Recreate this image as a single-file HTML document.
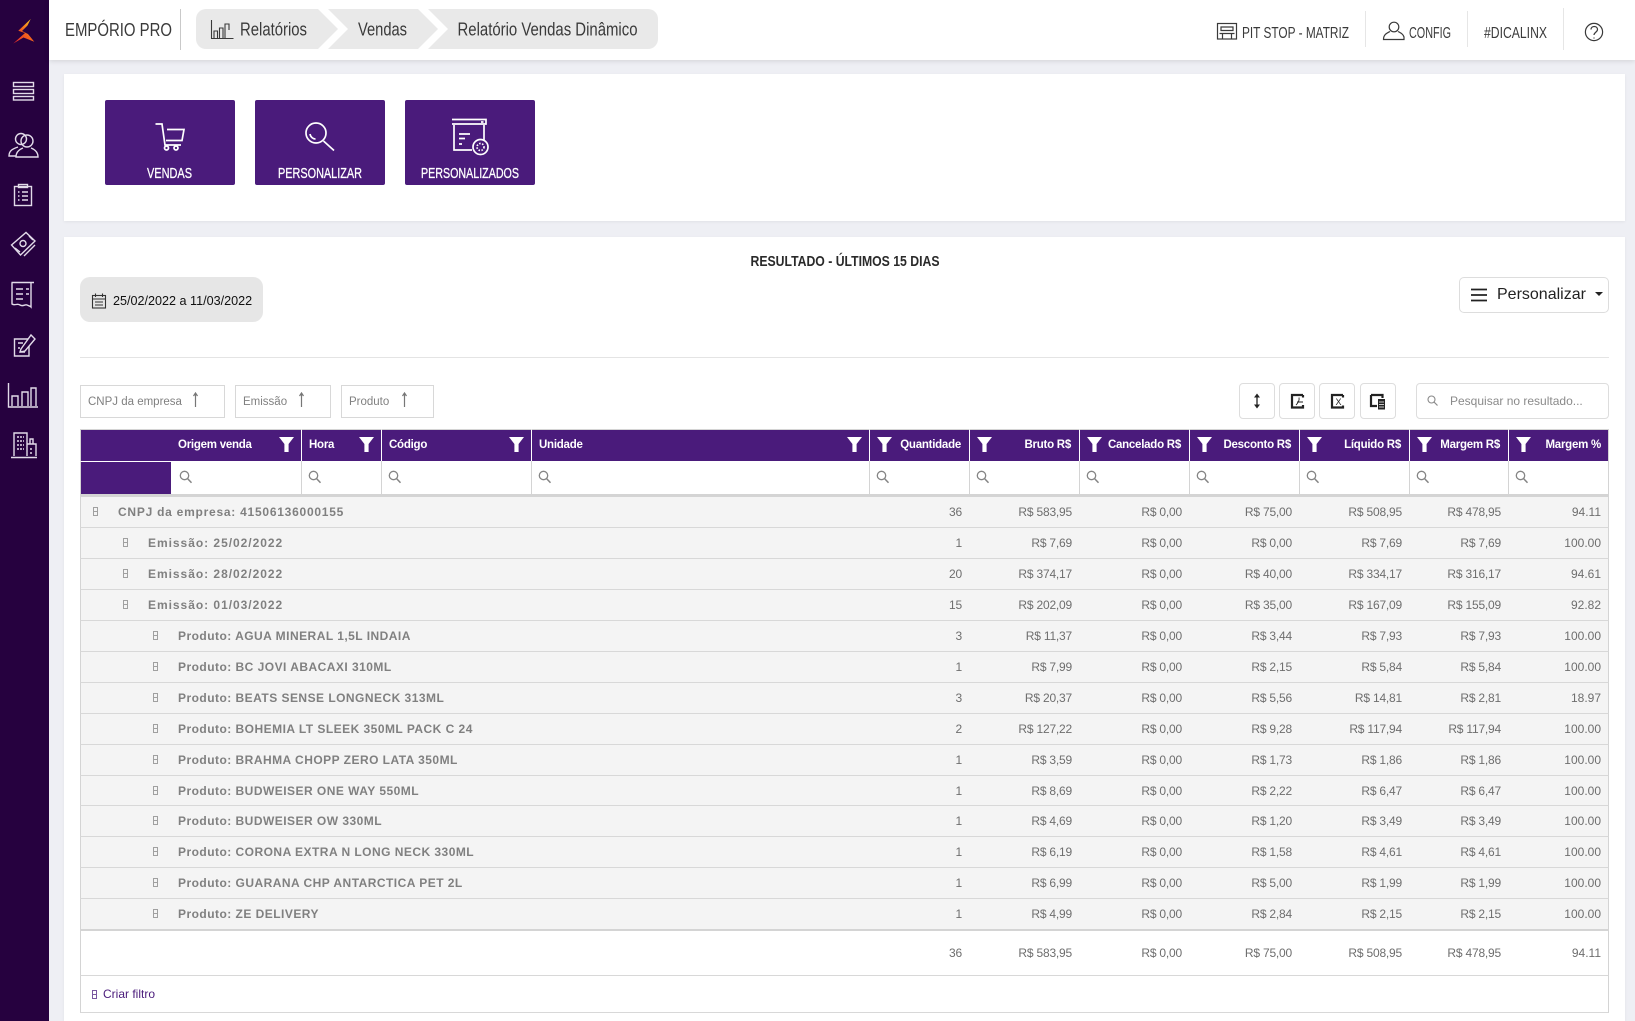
<!DOCTYPE html>
<html lang="pt-BR"><head><meta charset="utf-8"><title>Relatório Vendas Dinâmico</title>
<style>
html,body{margin:0;padding:0}
body{width:1635px;height:1021px;position:relative;overflow:hidden;background:#eeeff4;font-family:"Liberation Sans",sans-serif;color:#666}
.a{position:absolute}
svg{display:block;overflow:visible}
#side{left:0;top:0;width:49px;height:1021px;background:#26013f}
#top{left:49px;top:0;width:1586px;height:60px;background:#fff;box-shadow:0 1px 5px rgba(0,0,0,.12)}
.p{background:#fff;box-shadow:0 1px 3px rgba(0,0,0,.06);left:64px;width:1561px}
.btn{background:#4a1b7b;border-radius:2px;top:100px;width:130px;height:85px}
.chip{top:385px;height:33px;box-sizing:border-box;border:1px solid #d8d8d8;font-size:11.5px;line-height:32px;padding-left:7px;color:#808080}
.tool{top:383px;width:36px;height:36px;box-sizing:border-box;border:1px solid #ddd;border-radius:4px;background:#fff}
.div{width:1px;background:#e6e6e6}
table{position:absolute;left:80px;top:429px;width:1529px;table-layout:fixed;border-collapse:separate;border-spacing:0;font-size:12px}
th{background:#4a1b7b;color:#fff;height:32px;box-sizing:border-box;font-weight:bold;font-size:11.5px;letter-spacing:-.25px;padding:0 8px 1px 7px;border-right:1px solid #fff;border-top:1px solid #d4d4d4;text-align:right;position:relative;white-space:nowrap}
th.l{text-align:left}
th svg{position:absolute;top:7px;width:15px;height:15px}
th.l svg{right:7px}th.rr svg{left:7px}
.f td{height:36px;box-sizing:border-box;border-right:1px solid #d4d4d4;border-bottom:3px solid #d4d4d4;position:relative;background:#fff}
.f td svg{position:absolute;left:6px;top:9px}
.f td.o svg{left:8px}
.d td{height:31px;box-sizing:border-box;background:#f4f4f4;border-bottom:1px solid #d8d8d8;text-align:right;padding:0 8px;white-space:nowrap;color:#6e6e6e;letter-spacing:-.2px}
.d td.rb,.t td.rb{letter-spacing:0}
.d td.n{text-align:left;font-weight:bold;color:#808080;letter-spacing:.47px;position:relative;font-size:12px}
.d td.l0{letter-spacing:.75px}
.d td.l1{letter-spacing:.97px}
.d tr.s td{height:30px}
.d tr:last-child td{border-bottom:2px solid #d4d4d4;height:32px}
.n i{position:absolute;top:10px;width:5px;height:9px;border:1px solid #a0a0a0;box-sizing:border-box;background:linear-gradient(#a0a0a0,#a0a0a0) 0 3px/100% 1px no-repeat}
.l0{padding-left:37px!important}.l0 i{left:12px}
.l1{padding-left:67px!important}.l1 i{left:42px}
.l2{padding-left:97px!important}.l2 i{left:72px}
.t td{height:45px;box-sizing:border-box;background:#fff;border-bottom:1px solid #d8d8d8;text-align:right;padding:0 8px;color:#6e6e6e;letter-spacing:-.2px}
.c td{height:37px;box-sizing:border-box;background:#fff;border-bottom:1px solid #d8d8d8;text-align:left;color:#4a1b7b;padding-left:22px;position:relative}
.c i{position:absolute;left:11px;top:14px;width:5px;height:9px;border:1px solid #7a58a0;box-sizing:border-box;background:linear-gradient(#7a58a0,#7a58a0) 0 3px/100% 1px no-repeat}
.lb{border-left:1px solid #d4d4d4}.rb{border-right:1px solid #d4d4d4;padding-right:7px!important}
</style></head><body>
<svg width="0" height="0" style="position:absolute"><defs>
<symbol id="fn" viewBox="0 0 15 15"><path d="M0 0H15L9.600 7V15H5.400V7Z" fill="#fff"/></symbol>
<symbol id="mg" viewBox="0 0 14 14"><circle cx="5.500" cy="5.500" r="4.200" fill="none" stroke="#858585" stroke-width="1.300"/><path d="M8.600 8.600L12.500 12.800" stroke="#858585" stroke-width="1.500"/></symbol>
<linearGradient id="lg" gradientUnits="userSpaceOnUse" x1="13" y1="44" x2="34" y2="24"><stop offset="0" stop-color="#e8202c"/><stop offset=".55" stop-color="#f2601e"/><stop offset="1" stop-color="#f9c01c"/></linearGradient>
</defs></svg>

<div class="a" id="side">
<svg class="a" style="left:0;top:0" width="49" height="470" fill="none" stroke="#e2dbe9" stroke-width="1.400">
<path d="M30.700 19L18.300 30.700L25 33L13.300 43.500L23.500 37.500L34.300 41.700L28 34L22 31L27.500 25.500Z" fill="url(#lg)" stroke="none"/>
<rect x="13.500" y="82.500" width="20" height="4"/><rect x="13.500" y="89.500" width="20" height="4"/><rect x="13.500" y="96.500" width="20" height="3.500"/>
<circle cx="21" cy="139" r="5.500"/><path d="M18 147C12 149 9 151 9 156H16"/><circle cx="27" cy="141" r="6"/><path d="M23 148C18 150 16 153 16 157H38C38 153 36 150 31 148"/>
<rect x="14.500" y="186.500" width="17" height="19"/><rect x="18.500" y="184.500" width="9" height="3"/><path d="M18 192H19.500M22 192H28M18 196H19.500M22 196H28M18 200H19.500M22 200H28"/>
<path d="M11.500 245L26 232.500L35 241L20.500 255Z"/><path d="M15 248L20 252M29 236L33 240M24 256L35 245"/><circle cx="23" cy="243.500" r="3"/>
<path d="M11.500 282.500H34M12 282.500V304C15 306 17 303 20 305C23 307 25 304 27 305C29 306 30 306 31 307V282.500M16 289H23M26 289H29M16 294H23M26 294H29M16 299H23"/>
<path d="M28 339H14.500V356H29V346"/><path d="M21 349L31 335L35 339L25 351L20 352Z"/><path d="M18 343H23M18 348H20M20 352H25"/>
<path d="M8.500 383V407H38M12 406V396H18V406M22 406V392H28V406M31 406V388H36V406"/>
<path d="M14 456V433H27V456M27 444H36V456M30 444V439H33V444M11 457.500H37"/><path d="M17 437H24M17 441H24M17 445H24M17 449H24M30 449H33M30 453H33" stroke-dasharray="2 1"/>
</svg>
</div>

<div class="a" id="top"></div>
<svg class="a" style="left:0;top:0" width="1635" height="60" fill="#3a3a3a" font-family="Liberation Sans, sans-serif">
<text x="65" y="36" font-size="18" textLength="107" lengthAdjust="spacingAndGlyphs">EMPÓRIO PRO</text>
<rect x="180" y="9" width="1" height="41" fill="#c9c9c9"/>
<path d="M206 9H318L338 29L318 49H206A10 10 0 0 1 196 39V19A10 10 0 0 1 206 9Z" fill="#e9e9e9"/>
<path d="M328 9H418L438 29L418 49H328L348 29Z" fill="#e9e9e9"/>
<path d="M428 9H648A10 10 0 0 1 658 19V39A10 10 0 0 1 648 49H428L448 29Z" fill="#e9e9e9"/>
<g fill="none" stroke="#3a3a3a" stroke-width="1.100"><path d="M211.500 20V38.500H233.500M214 38V31H217.500V38M219.500 38V28H223V38M225 38V24H229V30"/></g>
<text x="240" y="35.500" font-size="18" textLength="67" lengthAdjust="spacingAndGlyphs">Relatórios</text>
<text x="358" y="35.500" font-size="18" textLength="49" lengthAdjust="spacingAndGlyphs">Vendas</text>
<text x="457.500" y="35.500" font-size="18" textLength="180" lengthAdjust="spacingAndGlyphs">Relatório Vendas Dinâmico</text>
<g fill="none" stroke="#3a3a3a" stroke-width="1.200">
<rect x="1217.500" y="23.500" width="19" height="15.500"/><path d="M1221 27H1233V30.500H1221ZM1222.500 39V33.500H1231.500V39M1219.500 33.500H1234.500"/>
<circle cx="1394" cy="27" r="4.800"/><path d="M1390 31.500C1387 33 1383.500 34.500 1383.500 39.500H1404V37C1403 34 1401 33 1398 31.500"/>
<circle cx="1594" cy="32" r="8.600"/><path d="M1591 29.500C1591 25.500 1597.500 25.500 1597.500 29.500C1597.500 32 1594 32.500 1594 35"/><path d="M1594 37.500V38.500"/>
</g>
<text x="1242" y="38" font-size="16" textLength="107" lengthAdjust="spacingAndGlyphs">PIT STOP - MATRIZ</text>
<text x="1409" y="38" font-size="16" textLength="42" lengthAdjust="spacingAndGlyphs">CONFIG</text>
<text x="1484" y="38" font-size="16" textLength="63" lengthAdjust="spacingAndGlyphs">#DICALINX</text>
</svg>
<div class="a div" style="left:1365px;top:11px;height:36px"></div>
<div class="a div" style="left:1467px;top:11px;height:36px"></div>
<div class="a div" style="left:1563px;top:8px;height:42px"></div>

<div class="a p" style="top:74px;height:147px"></div>
<div class="a btn" style="left:105px"></div>
<div class="a btn" style="left:255px"></div>
<div class="a btn" style="left:405px"></div>
<svg class="a" style="left:0;top:100px" width="600" height="85" fill="#fff" font-family="Liberation Sans, sans-serif">
<g fill="none" stroke="#fff" stroke-width="1.700" transform="translate(0,-100)">
<path d="M155.500 124H162L165 145H181M167 129.500H184L182 140.500H166"/><circle cx="166.500" cy="148" r="2"/><circle cx="176" cy="148" r="2"/>
<circle cx="316" cy="133" r="10"/><path d="M323.500 141L334 150.500M310 134C310.500 137 313 139 315.500 139"/>
<path d="M452 119.500H486V124H452M481 122H483.500"/><path d="M454 125V150H472M484 125V141"/><path d="M459 134H470M459 138.500H465M459 144H462"/><circle cx="480.500" cy="147" r="7.500"/><circle cx="480.500" cy="147" r="3.500" stroke-dasharray="1.500 1.500"/>
</g>
<g stroke="#fff" stroke-width=".3">
<text x="147" y="78" font-size="15" textLength="45" lengthAdjust="spacingAndGlyphs">VENDAS</text>
<text x="278" y="78" font-size="15" textLength="84" lengthAdjust="spacingAndGlyphs">PERSONALIZAR</text>
<text x="421" y="78" font-size="15" textLength="98" lengthAdjust="spacingAndGlyphs">PERSONALIZADOS</text>
</g>
</svg>

<div class="a p" style="top:237px;height:784px"></div>
<svg class="a" style="left:740px;top:250px" width="210" height="22" font-family="Liberation Sans, sans-serif"><text x="10.500" y="16" font-size="15" font-weight="bold" fill="#2a2a2a" textLength="189" lengthAdjust="spacingAndGlyphs">RESULTADO - ÚLTIMOS 15 DIAS</text></svg>

<div class="a" style="left:80px;top:277px;width:183px;height:45px;background:#e6e6e6;border-radius:10px"></div>
<svg class="a" style="left:92px;top:293px" width="15" height="16" fill="none" stroke="#333" stroke-width="1.100"><rect x=".5" y="2.500" width="13" height="12.500"/><path d="M.5 6H13.500M3.500 .5V4M10.500 .5V4M3 9H11M3 12H11"/></svg>
<div class="a" style="left:113px;top:294px;font-size:12.600px;line-height:15px;color:#111;white-space:nowrap">25/02/2022 a 11/03/2022</div>

<div class="a" style="left:1459px;top:277px;width:150px;height:36px;box-sizing:border-box;border:1px solid #ddd;border-radius:5px;background:#fff"></div>
<svg class="a" style="left:1471px;top:288px" width="16" height="14" stroke="#222" stroke-width="1.800"><path d="M0 1.500H16M0 7H16M0 12.500H16"/></svg>
<div class="a" style="left:1497px;top:285px;font-size:16px;line-height:19px;color:#222">Personalizar</div>
<svg class="a" style="left:1595px;top:292px" width="8" height="5"><path d="M0 0H8L4 4Z" fill="#222"/></svg>

<div class="a" style="left:80px;top:357px;width:1529px;height:1px;background:#e4e4e4"></div>

<div class="a chip" style="left:80px;width:145px">CNPJ da empresa</div>
<div class="a chip" style="left:235px;width:96px">Emissão</div>
<div class="a chip" style="left:341px;width:93px">Produto</div>
<svg class="a" style="left:190px;top:392px" width="220" height="17" fill="none" stroke="#777" stroke-width="1.200"><path d="M5.500 15V1M3.500 4L5.500 1L7.500 4"/><path d="M111.500 15V1M109.500 4L111.500 1L113.500 4"/><path d="M214.500 15V1M212.500 4L214.500 1L216.500 4"/></svg>

<div class="a tool" style="left:1239px"></div>
<div class="a tool" style="left:1279px"></div>
<div class="a tool" style="left:1319px"></div>
<div class="a tool" style="left:1360px"></div>
<svg class="a" style="left:1239px;top:383px" width="160" height="36" fill="none" stroke="#222" stroke-width="2.200" font-family="Liberation Sans, sans-serif">
<path d="M18 13V23" stroke-width="1.300"/><path d="M15 14.500L18 10.500L21 14.500ZM15 21.500L18 25.500L21 21.500Z" fill="#222" stroke="none"/>
<path d="M64 12H53V24.500H64V22M64 12V14.500"/><path d="M57 22C59 20 60.500 17 60 14.500M58 19H64" stroke-width=".9"/>
<path d="M104 12H93V24.500H104V22.500M104 12V14.500"/><text x="96.500" y="22" font-size="9" fill="#222" stroke="none">X</text>
<path d="M132 12H143.500V15M132 12V23H138"/><rect x="139" y="16" width="7" height="10.500" fill="#222" stroke="none"/><path d="M140 19H145M140 21.500H145M140 24H145" stroke="#fff" stroke-width=".8"/>
</svg>
<div class="a" style="left:1416px;top:383px;width:193px;height:36px;box-sizing:border-box;border:1px solid #ddd;border-radius:4px;background:#fff;font-size:12px;line-height:34px;padding-left:33px;color:#8a8a8a">Pesquisar no resultado...</div>
<svg class="a" style="left:1427px;top:395px" width="11" height="11"><circle cx="4.500" cy="4.500" r="3.500" fill="none" stroke="#8a8a8a" stroke-width="1.100"/><path d="M7 7L10.500 10.500" stroke="#8a8a8a" stroke-width="1.200"/></svg>

<table>
<colgroup><col style="width:91px"><col style="width:131px"><col style="width:80px"><col style="width:150px"><col style="width:338px"><col style="width:100px"><col style="width:110px"><col style="width:110px"><col style="width:110px"><col style="width:110px"><col style="width:99px"><col style="width:100px"></colgroup>
<thead>
<tr>
<th class="lb" style="border-right:0"></th>
<th class="l"><svg><use href="#fn"/></svg>Origem venda</th>
<th class="l"><svg><use href="#fn"/></svg>Hora</th>
<th class="l"><svg><use href="#fn"/></svg>Código</th>
<th class="l"><svg><use href="#fn"/></svg>Unidade</th>
<th class="rr"><svg><use href="#fn"/></svg>Quantidade</th>
<th class="rr"><svg><use href="#fn"/></svg>Bruto R$</th>
<th class="rr"><svg><use href="#fn"/></svg>Cancelado R$</th>
<th class="rr"><svg><use href="#fn"/></svg>Desconto R$</th>
<th class="rr"><svg><use href="#fn"/></svg>Líquido R$</th>
<th class="rr"><svg><use href="#fn"/></svg>Margem R$</th>
<th class="rr" style="border-right:1px solid #d4d4d4;padding-right:7px"><svg><use href="#fn"/></svg>Margem %</th>
</tr>
<tr class="f">
<td class="lb" style="background:#4a1b7b;border-right:0;border-top:1px solid #fff;border-bottom:3px solid #d4d4d4"></td>
<td class="o"><svg width="14" height="14"><use href="#mg"/></svg></td><td><svg width="14" height="14"><use href="#mg"/></svg></td><td><svg width="14" height="14"><use href="#mg"/></svg></td><td><svg width="14" height="14"><use href="#mg"/></svg></td><td><svg width="14" height="14"><use href="#mg"/></svg></td><td><svg width="14" height="14"><use href="#mg"/></svg></td><td><svg width="14" height="14"><use href="#mg"/></svg></td><td><svg width="14" height="14"><use href="#mg"/></svg></td><td><svg width="14" height="14"><use href="#mg"/></svg></td><td><svg width="14" height="14"><use href="#mg"/></svg></td><td><svg width="14" height="14"><use href="#mg"/></svg></td>
</tr>
</thead>
<tbody class="d">
<tr><td class="n l0 lb" colspan="5"><i></i>CNPJ da empresa: 41506136000155</td><td>36</td><td>R$ 583,95</td><td>R$ 0,00</td><td>R$ 75,00</td><td>R$ 508,95</td><td>R$ 478,95</td><td class="rb">94.11</td></tr>
<tr><td class="n l1 lb" colspan="5"><i></i>Emissão: 25/02/2022</td><td>1</td><td>R$ 7,69</td><td>R$ 0,00</td><td>R$ 0,00</td><td>R$ 7,69</td><td>R$ 7,69</td><td class="rb">100.00</td></tr>
<tr><td class="n l1 lb" colspan="5"><i></i>Emissão: 28/02/2022</td><td>20</td><td>R$ 374,17</td><td>R$ 0,00</td><td>R$ 40,00</td><td>R$ 334,17</td><td>R$ 316,17</td><td class="rb">94.61</td></tr>
<tr><td class="n l1 lb" colspan="5"><i></i>Emissão: 01/03/2022</td><td>15</td><td>R$ 202,09</td><td>R$ 0,00</td><td>R$ 35,00</td><td>R$ 167,09</td><td>R$ 155,09</td><td class="rb">92.82</td></tr>
<tr><td class="n l2 lb" colspan="5"><i></i>Produto: AGUA MINERAL 1,5L INDAIA</td><td>3</td><td>R$ 11,37</td><td>R$ 0,00</td><td>R$ 3,44</td><td>R$ 7,93</td><td>R$ 7,93</td><td class="rb">100.00</td></tr>
<tr><td class="n l2 lb" colspan="5"><i></i>Produto: BC JOVI ABACAXI 310ML</td><td>1</td><td>R$ 7,99</td><td>R$ 0,00</td><td>R$ 2,15</td><td>R$ 5,84</td><td>R$ 5,84</td><td class="rb">100.00</td></tr>
<tr><td class="n l2 lb" colspan="5"><i></i>Produto: BEATS SENSE LONGNECK 313ML</td><td>3</td><td>R$ 20,37</td><td>R$ 0,00</td><td>R$ 5,56</td><td>R$ 14,81</td><td>R$ 2,81</td><td class="rb">18.97</td></tr>
<tr><td class="n l2 lb" colspan="5"><i></i>Produto: BOHEMIA LT SLEEK 350ML PACK C 24</td><td>2</td><td>R$ 127,22</td><td>R$ 0,00</td><td>R$ 9,28</td><td>R$ 117,94</td><td>R$ 117,94</td><td class="rb">100.00</td></tr>
<tr><td class="n l2 lb" colspan="5"><i></i>Produto: BRAHMA CHOPP ZERO LATA 350ML</td><td>1</td><td>R$ 3,59</td><td>R$ 0,00</td><td>R$ 1,73</td><td>R$ 1,86</td><td>R$ 1,86</td><td class="rb">100.00</td></tr>
<tr class="s"><td class="n l2 lb" colspan="5"><i></i>Produto: BUDWEISER ONE WAY 550ML</td><td>1</td><td>R$ 8,69</td><td>R$ 0,00</td><td>R$ 2,22</td><td>R$ 6,47</td><td>R$ 6,47</td><td class="rb">100.00</td></tr>
<tr><td class="n l2 lb" colspan="5"><i></i>Produto: BUDWEISER OW 330ML</td><td>1</td><td>R$ 4,69</td><td>R$ 0,00</td><td>R$ 1,20</td><td>R$ 3,49</td><td>R$ 3,49</td><td class="rb">100.00</td></tr>
<tr><td class="n l2 lb" colspan="5"><i></i>Produto: CORONA EXTRA N LONG NECK 330ML</td><td>1</td><td>R$ 6,19</td><td>R$ 0,00</td><td>R$ 1,58</td><td>R$ 4,61</td><td>R$ 4,61</td><td class="rb">100.00</td></tr>
<tr><td class="n l2 lb" colspan="5"><i></i>Produto: GUARANA CHP ANTARCTICA PET 2L</td><td>1</td><td>R$ 6,99</td><td>R$ 0,00</td><td>R$ 5,00</td><td>R$ 1,99</td><td>R$ 1,99</td><td class="rb">100.00</td></tr>
<tr><td class="n l2 lb" colspan="5"><i></i>Produto: ZE DELIVERY</td><td>1</td><td>R$ 4,99</td><td>R$ 0,00</td><td>R$ 2,84</td><td>R$ 2,15</td><td>R$ 2,15</td><td class="rb">100.00</td></tr>
</tbody>
<tbody>
<tr class="t"><td class="lb" colspan="5"></td><td>36</td><td>R$ 583,95</td><td>R$ 0,00</td><td>R$ 75,00</td><td>R$ 508,95</td><td>R$ 478,95</td><td class="rb">94.11</td></tr>
<tr class="c"><td class="lb rb" colspan="12"><i></i>Criar filtro</td></tr>
</tbody>
</table>
</body></html>
